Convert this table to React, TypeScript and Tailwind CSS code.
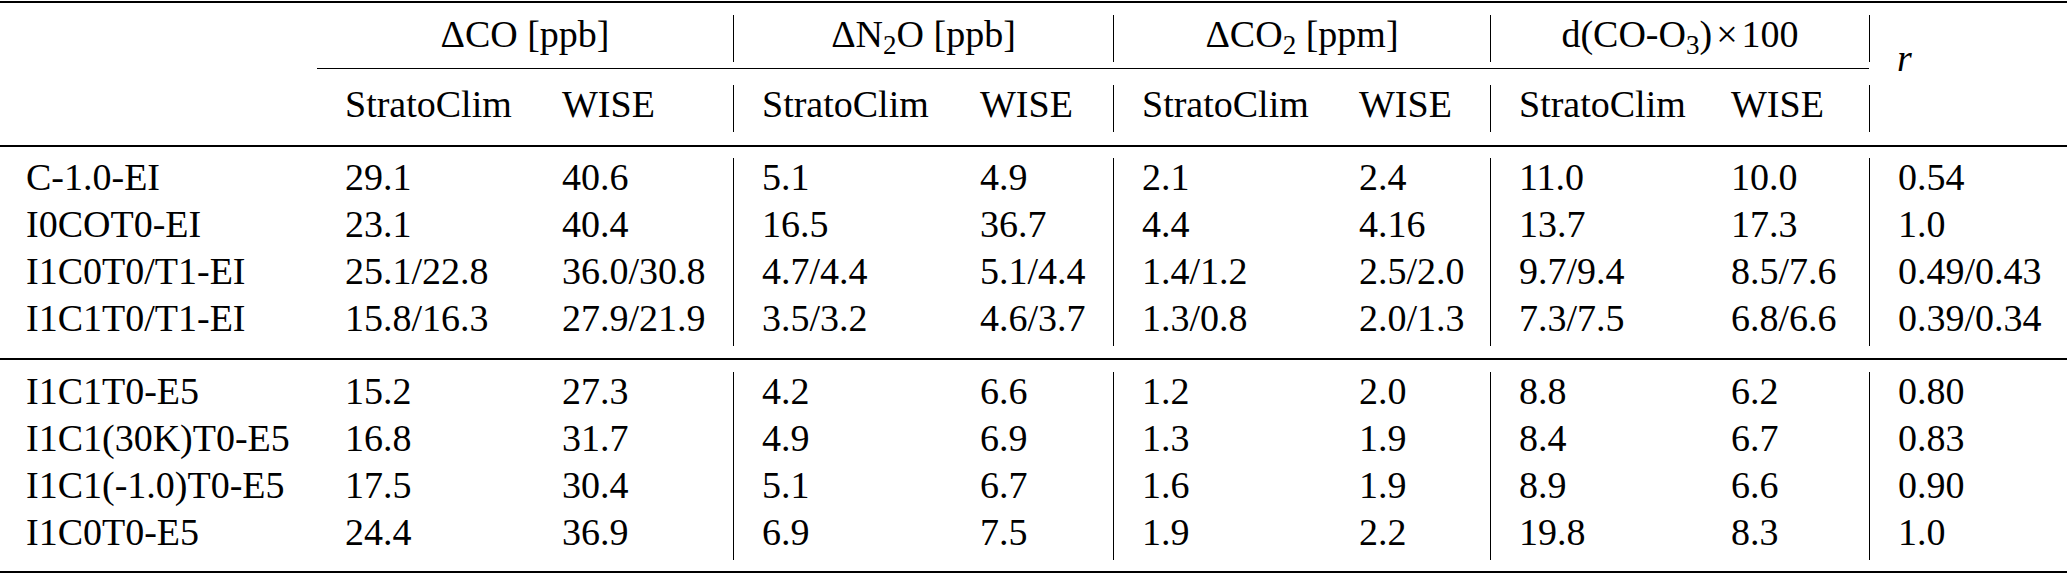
const cols =
  "grid grid-cols-[317px_217px_199px_219px_161px_218px_159px_213px_166px_198px]";

interface Row {
  label: string;
  values: string[];
}

const groupA: Row[] = [
  { label: "C-1.0-EI", values: ["29.1", "40.6", "5.1", "4.9", "2.1", "2.4", "11.0", "10.0", "0.54"] },
  { label: "I0COT0-EI", values: ["23.1", "40.4", "16.5", "36.7", "4.4", "4.16", "13.7", "17.3", "1.0"] },
  { label: "I1C0T0/T1-EI", values: ["25.1/22.8", "36.0/30.8", "4.7/4.4", "5.1/4.4", "1.4/1.2", "2.5/2.0", "9.7/9.4", "8.5/7.6", "0.49/0.43"] },
  { label: "I1C1T0/T1-EI", values: ["15.8/16.3", "27.9/21.9", "3.5/3.2", "4.6/3.7", "1.3/0.8", "2.0/1.3", "7.3/7.5", "6.8/6.6", "0.39/0.34"] },
];

const groupB: Row[] = [
  { label: "I1C1T0-E5", values: ["15.2", "27.3", "4.2", "6.6", "1.2", "2.0", "8.8", "6.2", "0.80"] },
  { label: "I1C1(30K)T0-E5", values: ["16.8", "31.7", "4.9", "6.9", "1.3", "1.9", "8.4", "6.7", "0.83"] },
  { label: "I1C1(-1.0)T0-E5", values: ["17.5", "30.4", "5.1", "6.7", "1.6", "1.9", "8.9", "6.6", "0.90"] },
  { label: "I1C0T0-E5", values: ["24.4", "36.9", "6.9", "7.5", "1.9", "2.2", "19.8", "8.3", "1.0"] },
];

// columns that carry a vertical rule on their left edge (value index)
const ruled = [2, 4, 6, 8];

function DataGroup({ rows }: { rows: Row[] }) {
  return (
    <div className={cols}>
      {rows.map((row) => (
        <div key={row.label} className="contents">
          <div className="h-[47px] pl-[26px] leading-[38px] whitespace-nowrap">{row.label}</div>
          {row.values.map((v, i) => (
            <div
              key={i}
              className={`h-[47px] pl-[28px] leading-[38px] whitespace-nowrap ${
                ruled.includes(i) ? "border-l border-black" : ""
              }`}
            >
              {v}
            </div>
          ))}
        </div>
      ))}
    </div>
  );
}

function Sub({ children }: { children: React.ReactNode }) {
  return <sub className="text-[27px]">{children}</sub>;
}

export default function App() {
  const head = "leading-[38px] whitespace-nowrap";
  return (
    <div className="w-[2067px] h-[573px] bg-white text-black text-[38px] font-['Liberation_Serif','Times_New_Roman',serif] overflow-hidden">
      <div className="pt-px">
        <div className="h-[2px] bg-black" />
      </div>

      {/* two header rows, cmidrule between them */}
      <div className={`${cols} grid-rows-[47px_23px_47px] mt-[12px]`}>
        <div className={`col-start-2 col-span-2 row-start-1 text-center ${head}`}>ΔCO [ppb]</div>
        <div className={`col-start-4 col-span-2 row-start-1 text-center border-l border-black ${head}`}>
          ΔN<Sub>2</Sub>O [ppb]
        </div>
        <div className={`col-start-6 col-span-2 row-start-1 text-center border-l border-black ${head}`}>
          ΔCO<Sub>2</Sub> [ppm]
        </div>
        <div className={`col-start-8 col-span-2 row-start-1 text-center border-l border-black ${head}`}>
          d(CO-O<Sub>3</Sub>)<span className="mx-[4px]">×</span>100
        </div>
        <div className="col-start-10 row-start-1 border-l border-black" />

        <div className="col-start-2 col-end-10 row-start-2 pt-[6px]">
          <div className="h-px bg-black" />
        </div>

        <div className={`col-start-2 row-start-3 pl-[28px] ${head}`}>StratoClim</div>
        <div className={`col-start-3 row-start-3 pl-[28px] ${head}`}>WISE</div>
        <div className={`col-start-4 row-start-3 pl-[28px] border-l border-black ${head}`}>StratoClim</div>
        <div className={`col-start-5 row-start-3 pl-[28px] ${head}`}>WISE</div>
        <div className={`col-start-6 row-start-3 pl-[28px] border-l border-black ${head}`}>StratoClim</div>
        <div className={`col-start-7 row-start-3 pl-[28px] ${head}`}>WISE</div>
        <div className={`col-start-8 row-start-3 pl-[28px] border-l border-black ${head}`}>StratoClim</div>
        <div className={`col-start-9 row-start-3 pl-[28px] ${head}`}>WISE</div>
        <div className="col-start-10 row-start-3 border-l border-black" />

        <div className={`col-start-10 row-start-1 row-end-4 pl-[28px] pt-[24px] italic ${head}`}>r</div>
      </div>

      <div className="mt-[13px] h-[2px] bg-black" />
      <div className="mt-[11px]">
        <DataGroup rows={groupA} />
      </div>
      <div className="mt-[12px] h-[2px] bg-black" />
      <div className="mt-[12px]">
        <DataGroup rows={groupB} />
      </div>
      <div className="mt-[11px] h-[2px] bg-black" />
    </div>
  );
}
